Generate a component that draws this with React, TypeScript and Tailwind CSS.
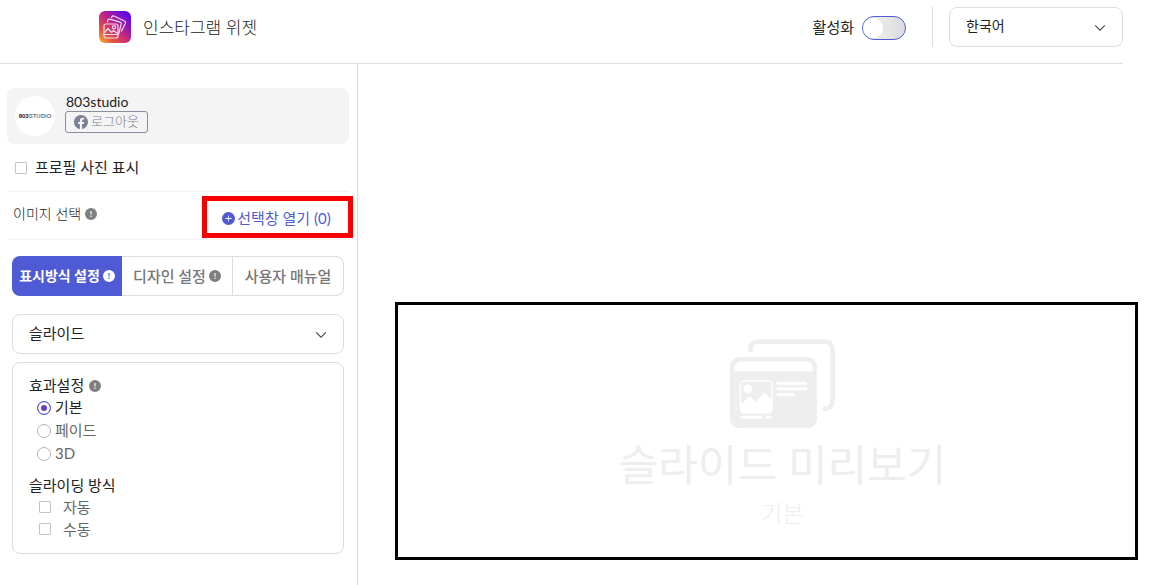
import React, { useState } from 'react';
import { BsChevronDown, BsExclamationCircleFill, BsFacebook, BsPlusCircleFill } from 'react-icons/bs';

const effects = ['기본', '페이드', '3D'];
const slidingModes = ['자동', '수동'];

const WidgetLogo: React.FC = () => (
  <svg width="32" height="32" viewBox="0 0 32 32" fill="none" aria-hidden="true">
    <defs>
      <linearGradient id="logo-base" x1="0" y1="32" x2="30" y2="0" gradientUnits="userSpaceOnUse">
        <stop offset="0" stopColor="#ffb52e" />
        <stop offset="0.25" stopColor="#e2553f" />
        <stop offset="0.5" stopColor="#c72a78" />
        <stop offset="0.75" stopColor="#8a14c0" />
        <stop offset="1" stopColor="#4b00ff" />
      </linearGradient>
    </defs>
    <rect width="32" height="32" rx="6" fill="url(#logo-base)" />
    <g stroke="#f3dcf4" strokeWidth="1.2" strokeLinecap="round" strokeLinejoin="round">
      <rect x="5" y="13" width="14" height="14" rx="2" />
      <path d="M5 23.5h14M5.5 21.5l3.5-4 3.5 4 2-2 4 3" />
      <circle cx="15" cy="16.2" r="1.6" />
      <path d="M8.5 10.8l.3-1.6a1.5 1.5 0 0 1 1.9-1l10.5 2.9a1.5 1.5 0 0 1 1 1.9l-2.4 9.6" />
      <path d="M12.5 6.6l.5-1a1.5 1.5 0 0 1 2-.6l10.8 5.2a1.5 1.5 0 0 1 .6 2l-4 8" />
    </g>
  </svg>
);

const PreviewArt: React.FC = () => (
  <svg width="107" height="91" viewBox="88 38 320 272" fill="none" aria-hidden="true">
    <path
      d="M152 74v-4c0-12 10-21 22-21h200c14 0 24 10 24 24v152c0 14-10 25-24 25"
      stroke="#eeeeee"
      strokeWidth="14"
      strokeLinecap="round"
    />
    <rect x="91" y="95" width="260" height="213" rx="28" fill="#eeeeee" />
    <path d="M105 138v-12c0-10 8-18 18-18h197c10 0 18 8 18 18v12z" fill="#fff" />
    <rect x="122" y="166" width="95" height="96" rx="11" stroke="#fff" strokeWidth="4" />
    <circle cx="144" cy="190" r="13" fill="#fff" />
    <path d="M122 238l28-26 18 16 26-27 23 20v30q0 11-11 11h-73q-11 0-11-11z" fill="#fff" />
    <path
      d="M234 173h84M234 190h84M234 207h46M126 275h59M201 275h11"
      stroke="#fff"
      strokeWidth="9"
      strokeLinecap="round"
    />
  </svg>
);

const Hint: React.FC<{ className?: string }> = ({ className = 'text-[#7d7f80]' }) => (
  <BsExclamationCircleFill size={12} className={`shrink-0 ${className}`} />
);

const Select: React.FC<{ label: string; options: string[]; className?: string }> = ({ label, options, className = '' }) => (
  <div className={`relative ${className}`}>
    <select
      aria-label={label}
      className="block h-10 w-full appearance-none rounded-lg border border-[#dedede] bg-white pl-4 pr-10 pb-[2px] text-[#222]"
    >
      {options.map((o) => (
        <option key={o}>{o}</option>
      ))}
    </select>
    <BsChevronDown size={12} className="pointer-events-none absolute right-[17px] top-[15px] text-[#333] stroke-[0.5]" />
  </div>
);

const checkboxClass =
  'size-3 shrink-0 appearance-none rounded-[1px] border border-[#c4c4c4] bg-white checked:bg-[#4f5bd5]';

export default function App() {
  const [active, setActive] = useState(false);
  const [showProfile, setShowProfile] = useState(false);
  const [effect, setEffect] = useState('기본');

  return (
    <div className="flex min-h-screen flex-col bg-white font-['Lato','Noto_Sans_CJK_KR',sans-serif] text-[15px] text-[#222]">
      {/* HEADER */}
      <header className="mr-7 flex items-center border-b border-[#dcdcdc] pt-[7px] pb-4 pl-[99px]">
        <WidgetLogo />
        <h1 className="ml-3 pt-[2px] text-[17px] font-light">인스타그램 위젯</h1>
        <div className="ml-auto flex h-10 items-center">
          <label htmlFor="active">활성화</label>
          <input
            id="active"
            type="checkbox"
            role="switch"
            checked={active}
            onChange={(e) => setActive(e.target.checked)}
            className="mt-[2px] ml-2 h-6 w-11 appearance-none rounded-full border border-[#4f5bd5] bg-linear-to-r from-[#f4f4f4] to-[#dcdcdc] before:block before:size-5 before:translate-y-px before:rounded-full before:bg-white checked:bg-[#4f5bd5] checked:before:translate-x-5"
          />
          <span className="ml-[26px] mr-4 h-full border-l border-[#dcdcdc]" />
          <Select label="언어" options={['한국어', 'English']} className="w-[174px] text-sm" />
        </div>
      </header>

      <div className="flex flex-1">
        {/* SIDEBAR */}
        <aside className="w-[358px] shrink-0 border-r border-[#dcdcdc] pt-6 pr-2 pl-[7px]">
          <div className="flex h-14 items-center rounded-lg bg-[#f4f4f4] px-2">
            <div className="flex size-10 items-center justify-center rounded-full bg-white font-['Liberation_Sans_Narrow','Liberation_Sans',sans-serif] text-[6px] font-bold text-[#777]">
              <b className="text-[#222]">803</b>STUDIO
            </div>
            <div className="mb-[5px] ml-[10px]">
              <p className="pl-px text-sm leading-4">803studio</p>
              <button className="mt-px flex h-[22px] items-center gap-[3px] rounded-[3px] border border-[#8a8fa0] px-2 pb-px text-[13px] font-light text-[#7c8193]">
                <BsFacebook size={14} />
                로그아웃
              </button>
            </div>
          </div>

          <label className="flex h-12 items-center gap-2 border-b border-[#f2f2f2] pl-2">
            <input
              type="checkbox"
              checked={showProfile}
              onChange={(e) => setShowProfile(e.target.checked)}
              className={checkboxClass}
            />
            프로필 사진 표시
          </label>

          <div className="flex h-12 items-end justify-between border-b border-[#f2f2f2] pl-[6px]">
            <span className="flex h-full items-center gap-1 pb-[3px] text-sm font-light">
              이미지 선택 <Hint />
            </span>
            <button className="-mr-1 mb-px flex h-[42px] w-[151px] items-center justify-center gap-[2px] border-5 border-[#f90000] pt-[2px] pr-[2px] text-[#4f5bd5]">
              <BsPlusCircleFill size={13} />
              선택창 열기 (0)
            </button>
          </div>

          {/* SETTINGS */}
          <div className="px-[5px] pt-4">
            <div role="tablist" className="flex h-10 font-medium text-[#777]">
              <button
                role="tab"
                aria-selected="true"
                className="flex w-[110px] items-center justify-center gap-[3px] rounded-l-lg bg-[#4f5bd5] text-sm font-bold text-white"
              >
                표시방식 설정 <Hint className="text-white" />
              </button>
              <button
                role="tab"
                aria-selected="false"
                className="flex w-[111px] items-center justify-center gap-[3px] border-y border-r border-[#dcdcdc]"
              >
                디자인 설정 <Hint />
              </button>
              <button role="tab" aria-selected="false" className="flex-1 rounded-r-lg border-y border-r border-[#dcdcdc]">
                사용자 매뉴얼
              </button>
            </div>

            <Select label="표시방식" options={['슬라이드', '그리드']} className="mt-[18px]" />

            <div className="mt-2 rounded-lg border border-[#dcdcdc] px-4 pt-3 pb-[13px]">
              <fieldset>
                <legend className="flex h-[21px] items-center gap-[5px]">
                  효과설정 <Hint />
                </legend>
                {effects.map((name) => (
                  <label
                    key={name}
                    className={`flex h-[23px] items-center gap-1 pl-2 ${name === effect ? 'text-[#222]' : 'text-[#666]'}`}
                  >
                    <input
                      type="radio"
                      name="effect"
                      checked={name === effect}
                      onChange={() => setEffect(name)}
                      className="size-[14px] appearance-none rounded-full border border-[#b5b5b5] bg-white checked:border-[#4f5bd5] checked:bg-[#6a3fc0] checked:shadow-[inset_0_0_0_3px_#fff]"
                    />
                    {name}
                  </label>
                ))}
              </fieldset>
              <fieldset className="mt-[9px]">
                <legend className="h-[22px] leading-[22px]">슬라이딩 방식</legend>
                {slidingModes.map((name) => (
                  <label key={name} className="flex h-[22px] items-center gap-3 pl-[10px] text-[#666]">
                    <input type="checkbox" className={checkboxClass} />
                    {name}
                  </label>
                ))}
              </fieldset>
            </div>
          </div>
        </aside>

        {/* PREVIEW */}
        <main className="flex-1 pt-[238px] pr-[13px] pl-[37px]">
          <section className="flex flex-col items-center border-3 border-black pt-[33px] pb-[27px] pl-8 text-[#eeeeee]">
            <PreviewArt />
            <h2 className="mt-1 text-[43px] leading-[64px]">슬라이드 미리보기</h2>
            <p className="text-[23px] leading-[33px] font-light">기본</p>
          </section>
        </main>
      </div>
    </div>
  );
}
